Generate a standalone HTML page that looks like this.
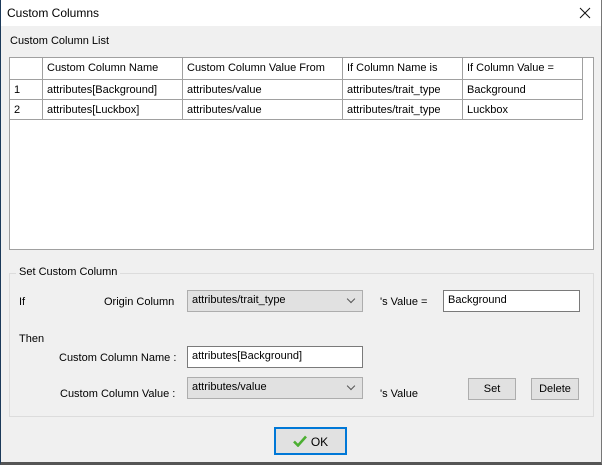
<!DOCTYPE html><html><head><style>
*{box-sizing:border-box;margin:0;padding:0}
body{width:602px;height:465px;overflow:hidden;background:#f0f0f0;font-family:"Liberation Sans",sans-serif;font-size:11px;color:#000;position:relative}
.a{position:absolute;white-space:nowrap}
.title{left:0;top:0;width:602px;height:26px;background:#fff}
.frame{left:0;top:0;width:602px;height:465px;border-left:1px solid #1c3a5a;border-right:1px solid #777;border-bottom:3px solid #555}
.grid{left:9px;top:57px;width:585px;height:193px;background:#fff;border:1px solid #a0a0a0}
.c{position:absolute;height:20px;border-right:1px solid #a0a0a0;border-bottom:1px solid #a0a0a0;padding:4px 0 0 4px;font-size:11px}
.in{background:#fff;border:1px solid #7a7a7a;height:22px;padding:3px 4px}
.cb{background:#e1e1e1;border:1px solid #adadad;height:22px;padding:3px 4px}
.cb:after{content:"";position:absolute;right:8px;top:5px;width:5px;height:5px;border-right:1px solid #555;border-bottom:1px solid #555;transform:rotate(45deg)}
.btn{background:#e1e1e1;border:1px solid #adadad;height:22px;text-align:center;padding-top:4px}
</style></head><body>
<div class="a title"></div>
<div class="a" style="left:7px;top:6px;font-size:12px">Custom Columns</div>
<svg class="a" style="left:579px;top:7px" width="12" height="12" viewBox="0 0 12 12"><path d="M1 1L11 11M11 1L1 11" stroke="#111" stroke-width="1"/></svg>
<div class="a" style="left:10px;top:35px">Custom Column List</div>
<div class="a grid">
<div class="c" style="left:0;top:0;width:33px;height:22px"></div>
<div class="c" style="left:33px;top:0;width:140px;height:22px">Custom Column Name</div>
<div class="c" style="left:173px;top:0;width:160px;height:22px">Custom Column Value From</div>
<div class="c" style="left:333px;top:0;width:120px;height:22px">If Column Name is</div>
<div class="c" style="left:453px;top:0;width:120px;height:22px">If Column Value =</div>
<div class="c" style="left:0;top:22px;width:33px">1</div>
<div class="c" style="left:33px;top:22px;width:140px">attributes[Background]</div>
<div class="c" style="left:173px;top:22px;width:160px">attributes/value</div>
<div class="c" style="left:333px;top:22px;width:120px">attributes/trait_type</div>
<div class="c" style="left:453px;top:22px;width:120px">Background</div>
<div class="c" style="left:0;top:42px;width:33px">2</div>
<div class="c" style="left:33px;top:42px;width:140px">attributes[Luckbox]</div>
<div class="c" style="left:173px;top:42px;width:160px">attributes/value</div>
<div class="c" style="left:333px;top:42px;width:120px">attributes/trait_type</div>
<div class="c" style="left:453px;top:42px;width:120px">Luckbox</div>
</div>
<div class="a" style="left:9px;top:273px;width:585px;height:144px;border:1px solid #dcdcdc"></div>
<div class="a" style="left:16px;top:266px;background:#f0f0f0;padding:0 3px">Set Custom Column</div>
<div class="a" style="left:19px;top:296px">If</div>
<div class="a" style="left:104px;top:296px">Origin Column</div>
<div class="a cb" style="left:187px;top:290px;width:176px">attributes/trait_type</div>
<div class="a" style="left:380px;top:296px">'s Value =</div>
<div class="a in" style="left:443px;top:290px;width:137px">Background</div>
<div class="a" style="left:19px;top:333px">Then</div>
<div class="a" style="left:59px;top:352px">Custom Column Name :</div>
<div class="a in" style="left:187px;top:346px;width:176px">attributes[Background]</div>
<div class="a" style="left:60px;top:388px">Custom Column Value :</div>
<div class="a cb" style="left:187px;top:377px;width:176px">attributes/value</div>
<div class="a" style="left:380px;top:388px">'s Value</div>
<div class="a btn" style="left:468px;top:378px;width:48px">Set</div>
<div class="a btn" style="left:531px;top:378px;width:48px">Delete</div>
<div class="a btn" style="left:274px;top:427px;width:73px;height:28px;border:2px solid #0078d7;padding-top:6px;font-size:12px"><svg width="14" height="12" viewBox="0 0 14 12" style="vertical-align:-1px;margin-right:4px"><path d="M1 6.5L5 10.5L13 1.5" fill="none" stroke="#4caf32" stroke-width="2.6"/></svg>OK</div>
<div class="a frame"></div>
</body></html>
